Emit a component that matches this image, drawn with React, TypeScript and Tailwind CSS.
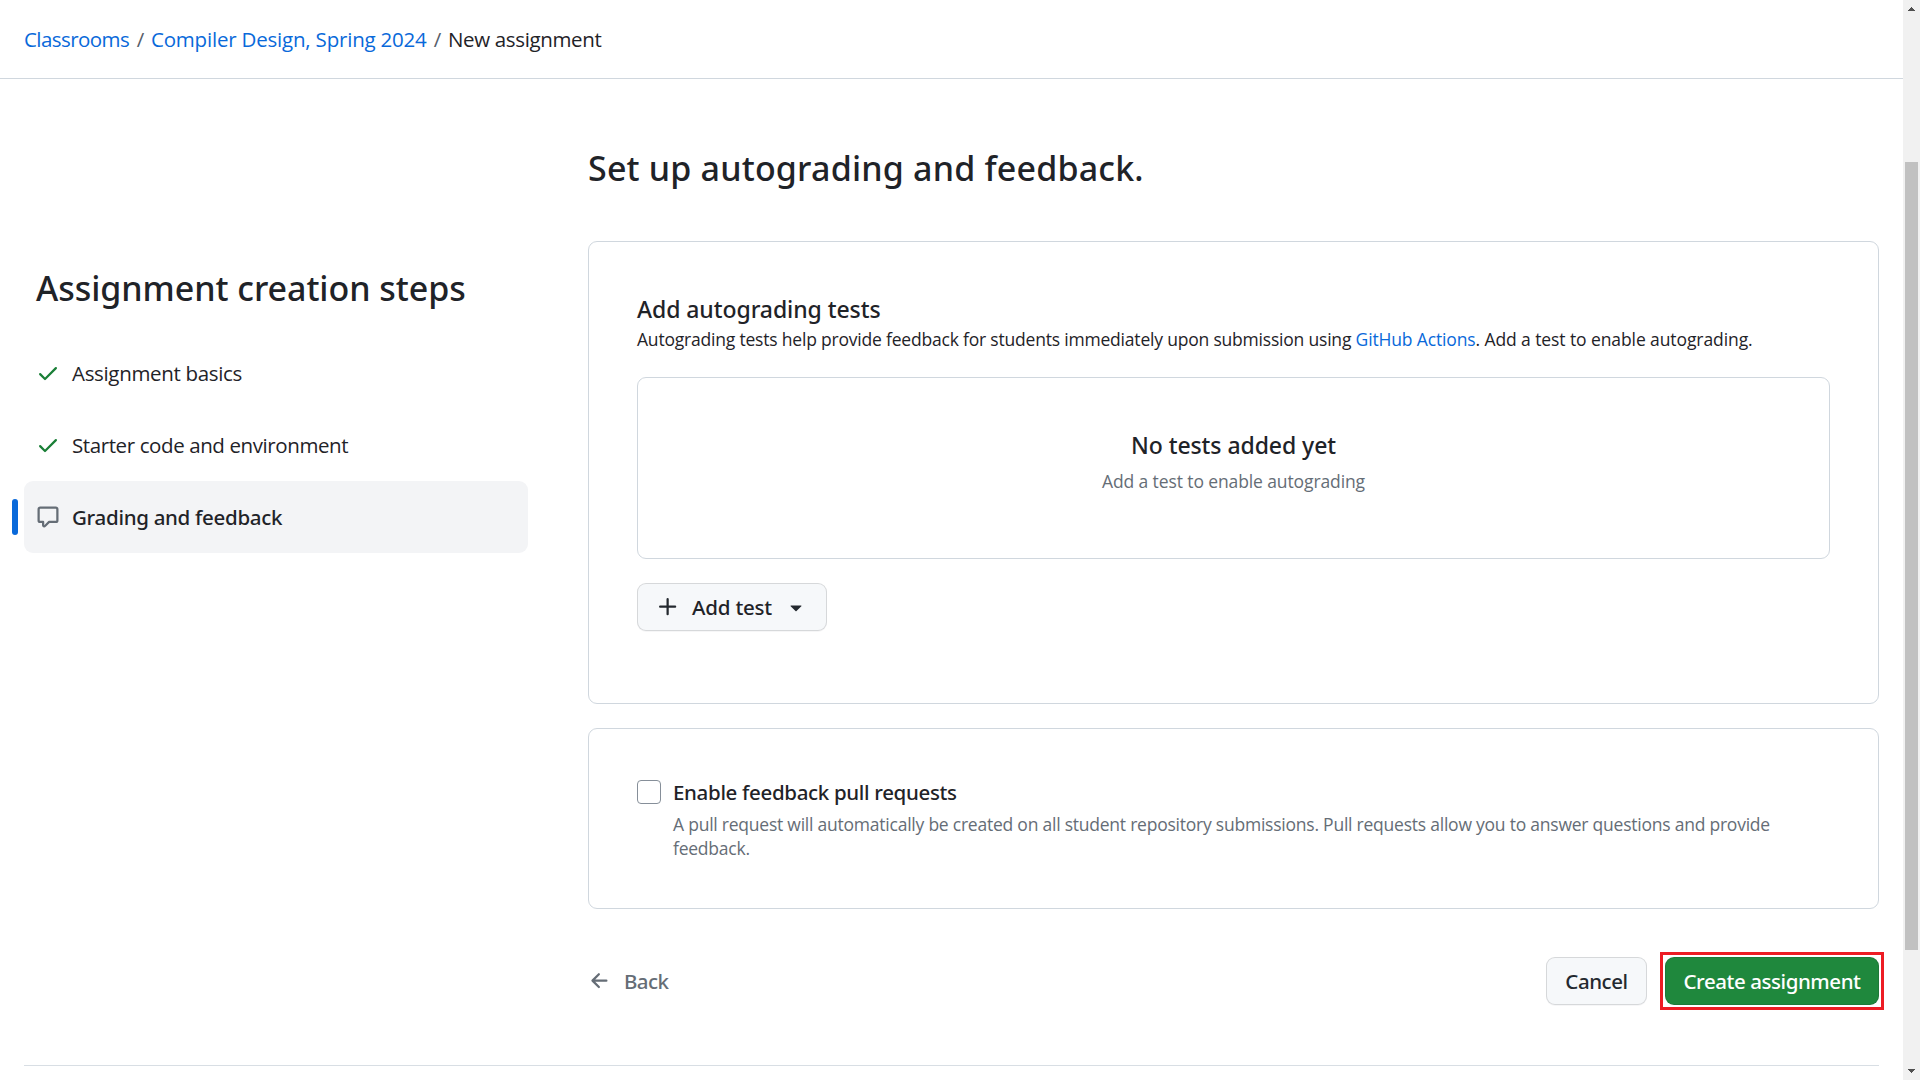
import type { ReactNode } from "react";

const SANS = "font-['Open_Sans','Noto_Sans',sans-serif]";
const STRONG = "font-['Noto_Sans','Open_Sans',sans-serif] font-medium";

function Icon({ d, className }: { d: string; className: string }) {
  return (
    <svg viewBox="0 0 16 16" fill="currentColor" className={`shrink-0 ${className}`}>
      <path d={d} />
    </svg>
  );
}

const CHECK =
  "M13.78 4.22a.75.75 0 0 1 0 1.06l-7.25 7.25a.75.75 0 0 1-1.06 0L2.22 9.28a.751.751 0 0 1 .018-1.042.751.751 0 0 1 1.042-.018L6 10.94l6.72-6.72a.75.75 0 0 1 1.06 0Z";
const COMMENT =
  "M1 2.75C1 1.784 1.784 1 2.75 1h10.5c.966 0 1.75.784 1.75 1.75v7.5A1.75 1.75 0 0 1 13.25 12H9.06l-2.573 2.573A1.458 1.458 0 0 1 4 13.543V12H2.75A1.75 1.75 0 0 1 1 10.25Zm1.75-.25a.25.25 0 0 0-.25.25v7.5c0 .138.112.25.25.25h2a.75.75 0 0 1 .75.75v2.19l2.72-2.72a.749.749 0 0 1 .53-.22h4.5a.25.25 0 0 0 .25-.25v-7.5a.25.25 0 0 0-.25-.25Z";
const PLUS =
  "M7.75 2a.75.75 0 0 1 .75.75V7h4.25a.75.75 0 0 1 0 1.5H8.5v4.25a.75.75 0 0 1-1.5 0V8.5H2.75a.75.75 0 0 1 0-1.5H7V2.75A.75.75 0 0 1 7.75 2Z";
const ARROW_LEFT =
  "M7.78 12.53a.75.75 0 0 1-1.06 0L2.47 8.28a.75.75 0 0 1 0-1.06l4.25-4.25a.751.751 0 0 1 1.042.018.751.751 0 0 1 .018 1.042L4.81 7h7.44a.75.75 0 0 1 0 1.5H4.81l2.97 2.97a.75.75 0 0 1 0 1.06Z";
const CARET =
  "m4.427 7.427 3.396 3.396a.25.25 0 0 0 .354 0l3.396-3.396A.25.25 0 0 0 11.396 7H4.604a.25.25 0 0 0-.177.427Z";

function Step({ icon, children, active }: { icon: ReactNode; children: ReactNode; active?: boolean }) {
  return (
    <li
      className={`relative flex h-[72px] items-center gap-3 rounded-[9px] pl-3 text-[20.5px] leading-[30px] ${
        active ? "bg-[#f3f4f6]" : ""
      }`}
    >
      {active && <span className="absolute top-[18px] -left-3 h-9 w-1.5 rounded-full bg-[#0969da]" />}
      {icon}
      {children}
    </li>
  );
}

function Header() {
  return (
    <nav className="flex h-[79px] items-center border-b border-[#d0d7de] pl-6 text-[20.5px] leading-[30px] whitespace-pre">
      <a className="w-[106px] tracking-[-0.57px] text-[#0969da]">Classrooms</a>
      <span className="w-[21px] text-center text-[#57606a]">/</span>
      <a className="w-[276px] tracking-[-0.2px] text-[#0969da]">Compiler Design, Spring 2024</a>
      <span className="w-[21px] text-center text-[#57606a]">/</span>
      <span className="tracking-[-0.35px]">New assignment</span>
    </nav>
  );
}

function Sidebar() {
  return (
    <aside className="w-[504px] shrink-0 pt-[182px]">
      <h2 className={`${STRONG} mb-[22px] pl-3 text-[34px] leading-[54px] tracking-[-0.05px]`}>
        Assignment creation steps
      </h2>
      <ul>
        <Step icon={<Icon d={CHECK} className="size-6 text-[#1a7f37]" />}>
          <span className="tracking-[-0.33px]">Assignment basics</span>
        </Step>
        <Step icon={<Icon d={CHECK} className="size-6 text-[#1a7f37]" />}>
          <span className="tracking-[-0.4px]">Starter code and environment</span>
        </Step>
        <Step active icon={<Icon d={COMMENT} className="size-6 text-[#656d76]" />}>
          <span className={`${STRONG} tracking-[-0.3px]`}>Grading and feedback</span>
        </Step>
      </ul>
    </aside>
  );
}

function Scrollbar() {
  return (
    <div className="flex h-full w-[17px] shrink-0 flex-col items-center bg-[#f1f1f1]">
      <svg viewBox="0 0 7 4" shapeRendering="crispEdges" className="mt-[7px] h-1 w-[7px] fill-[#505050]">
        <path d="M3 0h1v1h1v1h1v1h1v1H0V3h1V2h1V1h1z" />
      </svg>
      <div className="mt-[151px] h-[788px] w-[13px] bg-[#c1c1c1]" />
      <svg viewBox="0 0 7 4" shapeRendering="crispEdges" className="mt-[119px] h-1 w-[7px] fill-[#505050]">
        <path d="M0 0h7v1H6v1H5v1H4v1H3V3H2V2H1V1H0z" />
      </svg>
    </div>
  );
}

export default function App() {
  return (
    <div className={`${SANS} flex h-[1080px] w-[1920px] overflow-hidden bg-white text-[#1f2328]`}>
      <div className="flex min-w-0 flex-1 flex-col">
        <Header />
        <div className="flex gap-[60px] px-6">
          <Sidebar />
          <main className="min-w-0 flex-1 pt-[62px]">
            <h1 className={`${STRONG} text-[34px] leading-[54px] tracking-[0.18px]`}>
              Set up autograding and feedback.
            </h1>

            <section className="mt-[46px] h-[463px] rounded-[9px] border border-[#d0d7de] px-12 pt-[49px]">
              <h3 className={`${STRONG} text-[23px] leading-9 tracking-[-0.07px]`}>Add autograding tests</h3>
              <p className="-mt-px text-[17.5px] leading-[27px] tracking-[-0.2px] whitespace-nowrap">
                Autograding tests help provide feedback for students immediately upon submission using{" "}
                <a className="tracking-[-0.15px] text-[#0969da]">GitHub Actions</a>
                <span className="tracking-[-0.09px]">. Add a test to enable autograding.</span>
              </p>
              <div className="mt-6 h-[182px] rounded-[9px] border border-[#d0d7de] pt-[49px] text-center">
                <h4 className={`${STRONG} text-[23px] leading-9 tracking-[-0.07px]`}>No tests added yet</h4>
                <p className="mt-[5px] text-[17.5px] leading-[27px] tracking-[-0.11px] text-[#656d76]">
                  Add a test to enable autograding
                </p>
              </div>
              <button
                className={`${STRONG} mt-6 flex h-12 w-[190px] items-center rounded-[9px] border border-[#1f2328]/15 bg-[#f6f8fa] pl-[18px] text-[20.5px] leading-[30px] shadow-[0_1px_0_rgba(31,35,40,0.04)]`}
              >
                <Icon d={PLUS} className="size-6 text-[#24292f]" />
                <span className="ml-3 w-20 text-left tracking-[-0.2px] whitespace-nowrap">Add test</span>
                <Icon d={CARET} className="ml-3 size-6 text-[#24292f]" />
              </button>
            </section>

            <section className="mt-6 flex h-[181px] gap-3 rounded-[9px] border border-[#d0d7de] px-12 pt-12">
              <span className="mt-[3px] size-6 shrink-0 rounded-[4px] border border-[#868f99] bg-white" />
              <div className="flex flex-col">
                <h3 className={`${STRONG} text-[20.5px] leading-[30px] tracking-[-0.33px]`}>
                  Enable feedback pull requests
                </h3>
                <p className="mt-[5px] text-[17.5px] leading-6 tracking-[-0.23px] text-[#656d76]">
                  A pull request will automatically be created on all student repository submissions. Pull requests allow you to answer
                  questions and provide
                  <br />
                  feedback.
                </p>
              </div>
            </section>

            <div className={`${STRONG} mt-12 flex h-12 items-center text-[20.5px] leading-[30px]`}>
              <a className="flex items-center text-[#656d76]">
                <Icon d={ARROW_LEFT} className="size-6" />
                <span className="ml-3 tracking-[-0.6px]">Back</span>
              </a>
              <button className="ml-auto flex h-12 w-[101px] items-center justify-center rounded-[9px] border border-[#1f2328]/15 bg-[#f6f8fa] tracking-[-0.45px] text-[#24292f] shadow-[0_1px_0_rgba(31,35,40,0.04)]">
                Cancel
              </button>
              <div className="-mr-[5px] ml-[13px] border-[3px] border-[#ed1c24] p-0.5">
                <button className="flex h-12 w-[214px] items-center justify-center rounded-[9px] border border-[#1f2328]/15 bg-[#1f883d] tracking-[-0.43px] text-white">
                  Create assignment
                </button>
              </div>
            </div>
          </main>
        </div>
        <hr className="mx-6 mt-[60px] border-t border-[#d8dee4]" />
      </div>
      <Scrollbar />
    </div>
  );
}
